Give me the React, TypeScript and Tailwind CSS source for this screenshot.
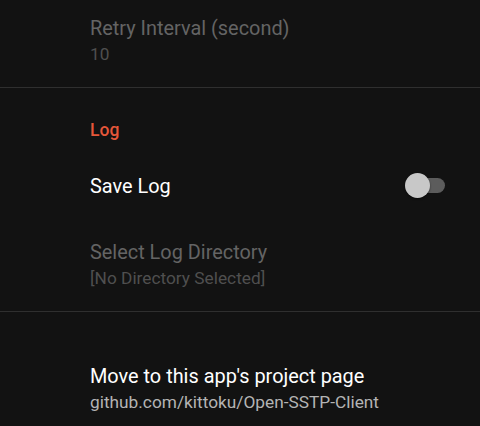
type PrefProps = {
  title: string
  summary?: string
  disabled?: boolean
  className?: string
  children?: React.ReactNode
}

function Pref({ title, summary, disabled, className = '', children }: PrefProps) {
  return (
    <div className={`flex items-center pl-[90px] pr-[35px] ${className}`}>
      <div className="min-w-0 flex-1">
        <p className={`text-[19.9px] leading-[26px] ${disabled ? 'text-[#646464]' : 'text-white'}`}>{title}</p>
        {summary && (
          <p className={`text-[17.3px] leading-[24px] ${disabled ? 'text-[#4f4f4f]' : 'text-[#b4b4b4]'}`}>{summary}</p>
        )}
      </div>
      {children}
    </div>
  )
}

function Switch() {
  return (
    <div className="relative mb-[2px] h-[25px] w-[40px] shrink-0" role="switch" aria-checked="false">
      <div className="absolute right-0 top-[5px] h-[15px] w-[37px] rounded-full bg-[#5c5c5c]" />
      <div className="absolute left-0 top-0 h-[25px] w-[25px] rounded-full bg-[#c8c8c8] shadow-[0_1px_2px_rgba(0,0,0,0.5)]" />
    </div>
  )
}

export default function App() {
  return (
    <div className="h-[426px] w-[480px] overflow-hidden bg-[#121212] font-['Roboto','Noto_Sans',sans-serif]">
      <Pref title="Retry Interval (second)" summary="10" disabled className="pt-[16px] pb-[21px]" />
      <div className="h-px bg-[#2f2f2f]" />
      <p className="pl-[90px] pt-[30px] text-[17.5px] font-medium leading-[24px] text-[#e5573a]">Log</p>
      <Pref title="Save Log" className="pt-[31px]">
        <Switch />
      </Pref>
      <Pref title="Select Log Directory" summary="[No Directory Selected]" disabled className="pt-[40px] pb-[21px]" />
      <div className="h-px bg-[#2f2f2f]" />
      <Pref title="Move to this app's project page" summary="github.com/kittoku/Open-SSTP-Client" className="pt-[52px]" />
    </div>
  )
}
